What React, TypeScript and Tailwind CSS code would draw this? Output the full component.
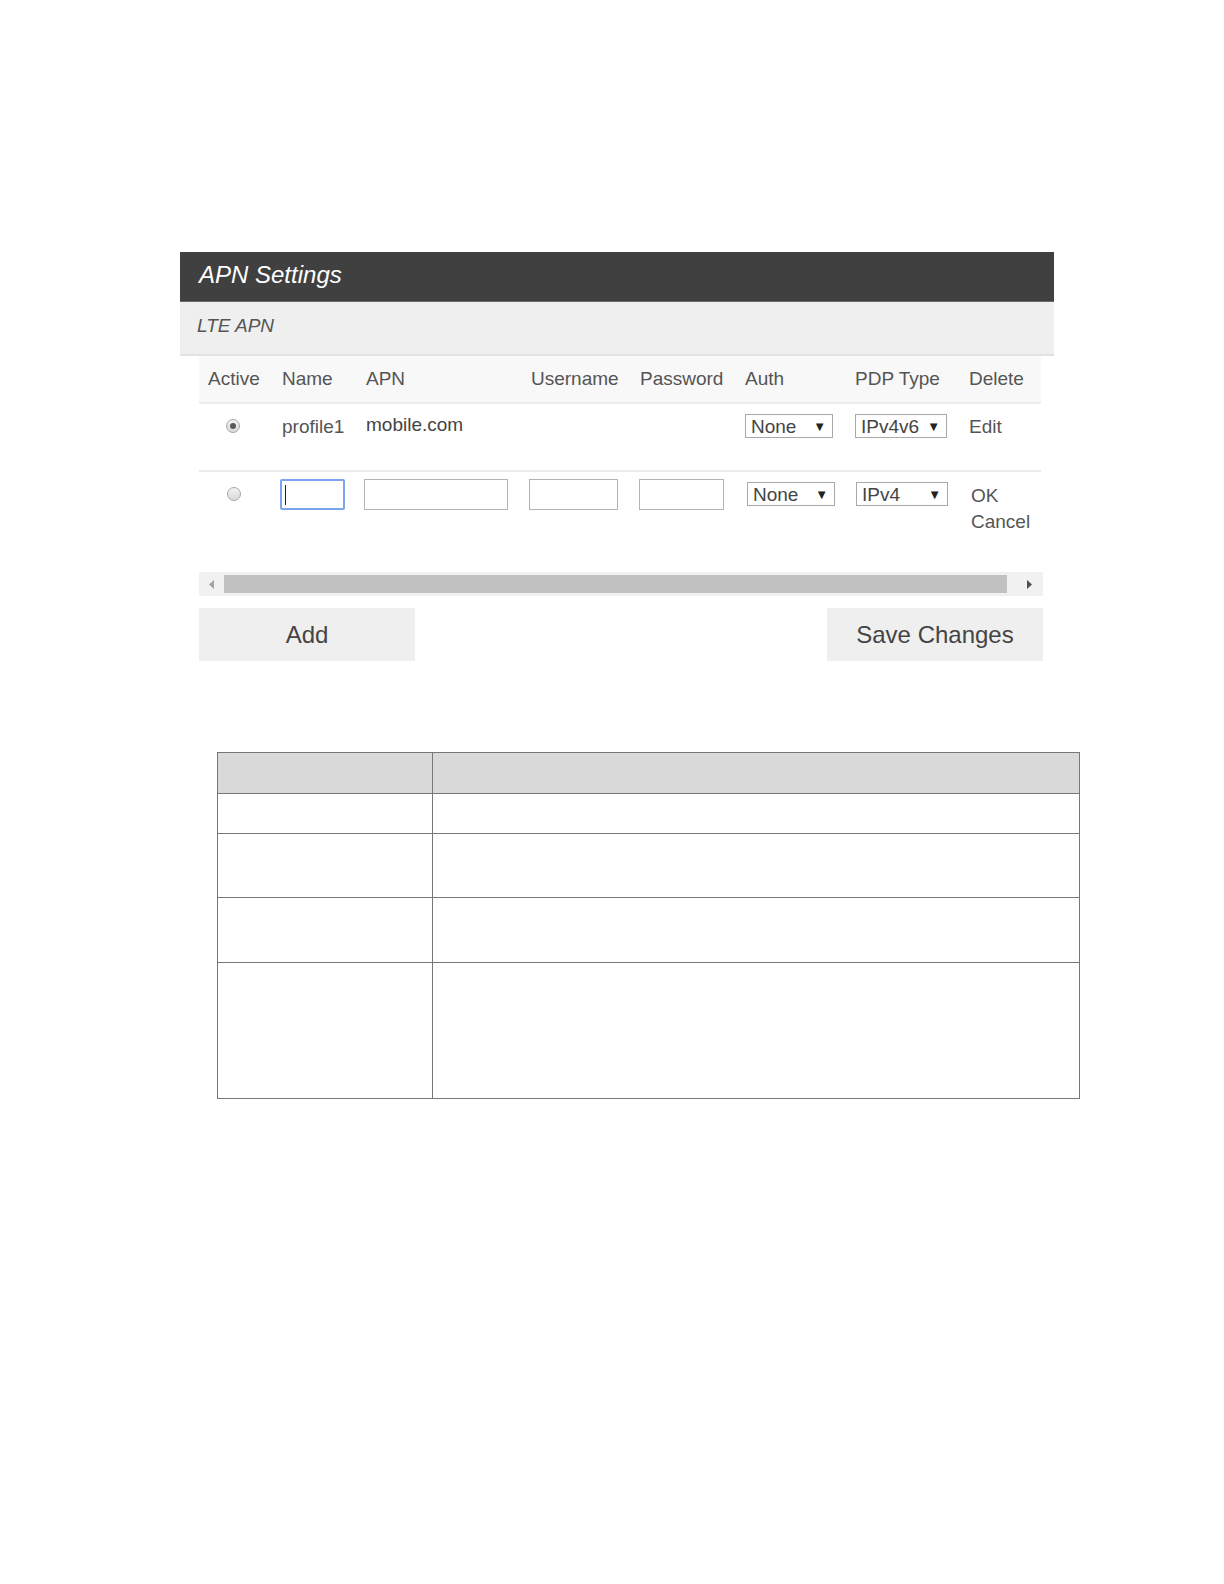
import React from "react";

const COLS = "grid grid-cols-[74px_84px_165px_109px_105px_110px_114px_81px]";

function Radio({ checked }: { checked?: boolean }) {
  return (
    <span className="flex h-[14px] w-[14px] items-center justify-center rounded-full border border-[#a6a6a6] bg-gradient-to-b from-[#f4f4f4] to-[#d8d8d8]">
      {checked && <span className="h-[6px] w-[6px] rounded-full bg-[#5a5a5a]" />}
    </span>
  );
}

function Select({ value, w }: { value: string; w: string }) {
  return (
    <div
      className={`flex h-[24px] items-center justify-between border border-[#a9a9a9] bg-white pl-[5px] pr-[6px] text-[19px] leading-none text-[#444] ${w}`}
    >
      <span>{value}</span>
      <span className="text-[13px] text-[#222]">▼</span>
    </div>
  );
}

function Box({ w, focused }: { w: string; focused?: boolean }) {
  return (
    <div
      className={`h-[31px] bg-white ${w} ${
        focused
          ? "flex items-center rounded-[2px] border-2 border-[#7ba4ee] pl-[3px]"
          : "border border-[#b3b3b3]"
      }`}
    >
      {focused && <span className="h-[20px] w-px bg-[#222]" />}
    </div>
  );
}

export default function App() {
  const headers = ["Active", "Name", "APN", "Username", "Password", "Auth", "PDP Type", "Delete"];
  return (
    <div
      className="min-h-screen w-full bg-white pt-[252px] pb-[300px] text-[#555]"
      style={{ fontFamily: '"Liberation Sans", Arial, sans-serif' }}
    >
      <div className="ml-[180px] w-[874px]">
        <div className="flex h-[50px] items-center border-b border-[#6a6a6a] bg-[#404040] pb-[4px] pl-[19px] text-[24px] italic text-white">
          APN Settings
        </div>
        <div className="flex h-[54px] items-center border-b-2 border-[#e2e2e2] bg-[#efefef] pb-[3px] pl-[17px] text-[19px] italic text-[#555]">
          LTE APN
        </div>

        <div className="pl-[19px] pr-[13px]">
          {/* column headers */}
          <div className={`${COLS} h-[48px] items-center border-b-2 border-[#ececec] bg-[#f8f8f8] text-[19px]`}>
            {headers.map((h) => (
              <div key={h} className="pl-[9px]">
                {h}
              </div>
            ))}
          </div>

          {/* profile row */}
          <div className={`${COLS} h-[68px] items-start border-b-2 border-[#ececec] pt-[7px] text-[19px] text-[#555]`}>
            <div className="flex pl-[27px] pt-[8px]">
              <Radio checked />
            </div>
            <div className="pl-[9px] pt-[2px]">profile1</div>
            <div className="pl-[9px] text-[#444]">mobile.com</div>
            <div />
            <div />
            <div className="pl-[9px] pt-[3px]">
              <Select value="None" w="w-[88px]" />
            </div>
            <div className="pl-[9px] pt-[3px]">
              <Select value="IPv4v6" w="w-[92px]" />
            </div>
            <div className="pl-[9px] pt-[2px]">Edit</div>
          </div>

          {/* new row */}
          <div className={`${COLS} h-[78px] items-start pt-[7px] text-[19px] text-[#555]`}>
            <div className="flex pl-[28px] pt-[8px]">
              <Radio />
            </div>
            <div className="pl-[7px]">
              <Box w="w-[65px]" focused />
            </div>
            <div className="pl-[7px]">
              <Box w="w-[144px]" />
            </div>
            <div className="pl-[7px]">
              <Box w="w-[89px]" />
            </div>
            <div className="pl-[8px]">
              <Box w="w-[85px]" />
            </div>
            <div className="pl-[11px] pt-[3px]">
              <Select value="None" w="w-[88px]" />
            </div>
            <div className="pl-[10px] pt-[3px]">
              <Select value="IPv4" w="w-[92px]" />
            </div>
            <div className="flex flex-col pl-[11px] pt-[4px] leading-[26px]">
              <span>OK</span>
              <span>Cancel</span>
            </div>
          </div>

          {/* scrollbar */}
          <div className="mt-[22px] flex h-[24px] w-[844px] items-center bg-[#f1f1f1]">
            <div className="flex w-[25px] justify-center">
              <svg width="6" height="9" viewBox="0 0 6 9">
                <path d="M5 0 L0 4.5 L5 9 Z" fill="#a3a3a3" />
              </svg>
            </div>
            <div className="h-[18px] flex-1 bg-[#c1c1c1]" />
            <div className="flex w-[36px] justify-end pr-[10px]">
              <svg width="6" height="9" viewBox="0 0 6 9">
                <path d="M0 0 L5 4.5 L0 9 Z" fill="#505050" />
              </svg>
            </div>
          </div>

          {/* buttons */}
          <div className="mt-[12px] flex w-[844px] justify-between">
            <button className="h-[53px] w-[216px] bg-[#efefef] text-[24px] text-[#444]">Add</button>
            <button className="h-[53px] w-[216px] bg-[#efefef] text-[24px] text-[#444]">Save Changes</button>
          </div>
        </div>
      </div>

      {/* description table */}
      <div className="ml-[217px] mt-[91px] w-[863px] border border-[#777]">
        <div className="grid h-[41px] grid-cols-[215px_1fr] border-b border-[#777] bg-[#d9d9d9]">
          <div className="border-r border-[#777]" />
          <div />
        </div>
        {[40, 64, 65, 135].map((h, i) => (
          <div
            key={i}
            className={`grid grid-cols-[215px_1fr] ${i < 3 ? "border-b border-[#777]" : ""}`}
            style={{ height: h }}
          >
            <div className="border-r border-[#777]" />
            <div />
          </div>
        ))}
      </div>
    </div>
  );
}
